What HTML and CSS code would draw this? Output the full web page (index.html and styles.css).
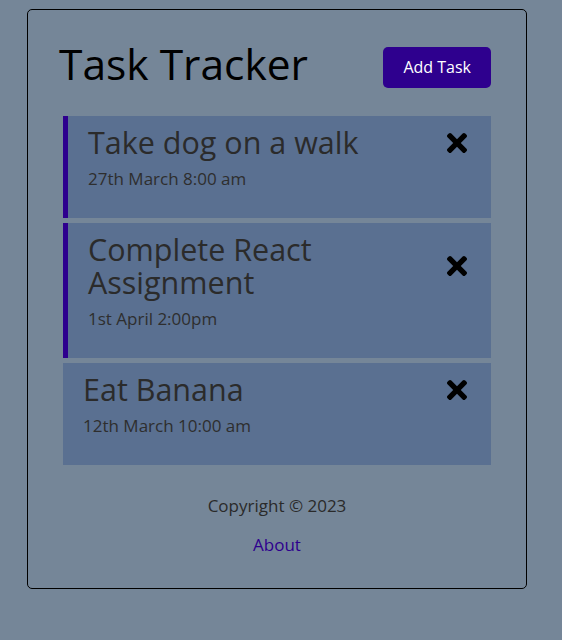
FILE: index.html
```html
<!DOCTYPE html>
<html lang="en">
<head>
<meta charset="utf-8">
<title>Task Tracker</title>
<link rel="stylesheet" href="styles.css">
</head>
<body>
<div class="container">
  <header class="header">
    <h1 class="title">Task Tracker</h1>
    <button class="btn">Add Task</button>
  </header>
  <div class="tasks">
    <div class="task reminder">
      <h3 class="task-title"><span>Take dog on a walk</span>
        <svg class="del" viewBox="0 80 352 352" width="20" height="20"><path d="M242.72 256l100.07-100.07c12.28-12.28 12.28-32.19 0-44.48l-22.24-22.24c-12.28-12.28-32.19-12.28-44.48 0L176 189.28 75.93 89.21c-12.28-12.28-32.19-12.28-44.48 0L9.21 111.45c-12.28 12.28-12.28 32.19 0 44.48L109.28 256 9.21 356.07c-12.28 12.28-12.28 32.19 0 44.48l22.24 22.24c12.28 12.28 32.2 12.28 44.48 0L176 322.72l100.07 100.07c12.28 12.28 32.2 12.28 44.480 0l22.24-22.24c12.28-12.28 12.28-32.19 0-44.48L242.72 256z"/></svg>
      </h3>
      <p class="task-date">27th March 8:00 am</p>
    </div>
    <div class="task reminder">
      <h3 class="task-title"><span>Complete React<br>Assignment</span>
        <svg class="del" viewBox="0 80 352 352" width="20" height="20"><path d="M242.72 256l100.07-100.07c12.28-12.28 12.28-32.19 0-44.48l-22.24-22.24c-12.28-12.28-32.19-12.28-44.48 0L176 189.28 75.930 89.21c-12.28-12.28-32.19-12.28-44.48 0L9.21 111.45c-12.28 12.28-12.28 32.19 0 44.48L109.28 256 9.21 356.07c-12.28 12.28-12.28 32.19 0 44.48l22.24 22.24c12.28 12.28 32.2 12.28 44.48 0L176 322.72l100.07 100.07c12.28 12.28 32.2 12.28 44.48 0l22.24-22.24c12.28-12.28 12.28-32.19 0-44.48L242.72 256z"/></svg>
      </h3>
      <p class="task-date">1st April 2:00pm</p>
    </div>
    <div class="task">
      <h3 class="task-title"><span>Eat Banana</span>
        <svg class="del" viewBox="0 80 352 352" width="20" height="20"><path d="M242.72 256l100.07-100.07c12.28-12.28 12.28-32.19 0-44.48l-22.24-22.24c-12.28-12.28-32.19-12.28-44.48 0L176 189.28 75.93 89.21c-12.28-12.28-32.19-12.28-44.48 0L9.21 111.45c-12.28 12.28-12.28 32.19 0 44.48L109.28 256 9.21 356.07c-12.28 12.28-12.28 32.19 0 44.48l22.24 22.24c12.28 12.28 32.2 12.28 44.48 0L176 322.72l100.07 100.07c12.28 12.28 32.2 12.28 44.48 0l22.24-22.24c12.28-12.28 12.28-32.19 0-44.48L242.72 256z"/></svg>
      </h3>
      <p class="task-date">12th March 10:00 am</p>
    </div>
  </div>
  <footer class="footer">
    <p class="copy">Copyright &copy; 2023</p>
    <a class="about" href="#">About</a>
  </footer>
</div>
</body>
</html>
```

FILE: styles.css
```css
* { box-sizing: border-box; }

body {
  margin: 0;
  background: #758698;
  font-family: "Open Sans", "Noto Sans", sans-serif;
  line-height: 1.5;
  color: #2a2a2a;
}

.container {
  width: 500px;
  margin: 9px 0 0 27px;
  border: 1px solid #000;
  border-radius: 5px;
  padding: 30px 30px 31px;
}

.header {
  display: flex;
  justify-content: space-between;
  align-items: center;
  height: 55px;
  margin-bottom: 21px;
}

.title {
  margin: 0 0 8px 1px;
  font-size: 42.5px;
  font-weight: 400;
  line-height: 48px;
  color: #000;
}

.btn {
  margin: 5px;
  padding: 10px 20px;
  border: none;
  border-radius: 5px;
  background: #2e008e;
  color: #fff;
  font-family: inherit;
  font-size: 16px;
  line-height: 21px;
}

.tasks {
  display: flex;
  flex-direction: column;
  gap: 5px;
  padding: 0 5px;
}

.task {
  background: #5a7091;
  padding: 10px 20px;
}

.task.reminder {
  border-left: 5px solid #2e008e;
}

.task-title {
  display: flex;
  justify-content: space-between;
  align-items: center;
  margin: 0;
  font-size: 30.5px;
  font-weight: 400;
  line-height: 33px;
  color: #2b2b2b;
}

.del {
  fill: #000;
  margin-right: 4px;
  flex-shrink: 0;
}

.task-date {
  margin: 8px 0 17px;
  font-size: 17px;
  line-height: 24px;
  color: #2e2e2e;
}

.footer {
  margin-top: 29px;
  text-align: center;
}

.copy {
  margin: 0 0 15px;
  font-size: 17px;
  line-height: 24px;
}

.about {
  display: block;
  font-size: 17px;
  line-height: 24px;
  color: #2e008e;
  text-decoration: none;
}
```
